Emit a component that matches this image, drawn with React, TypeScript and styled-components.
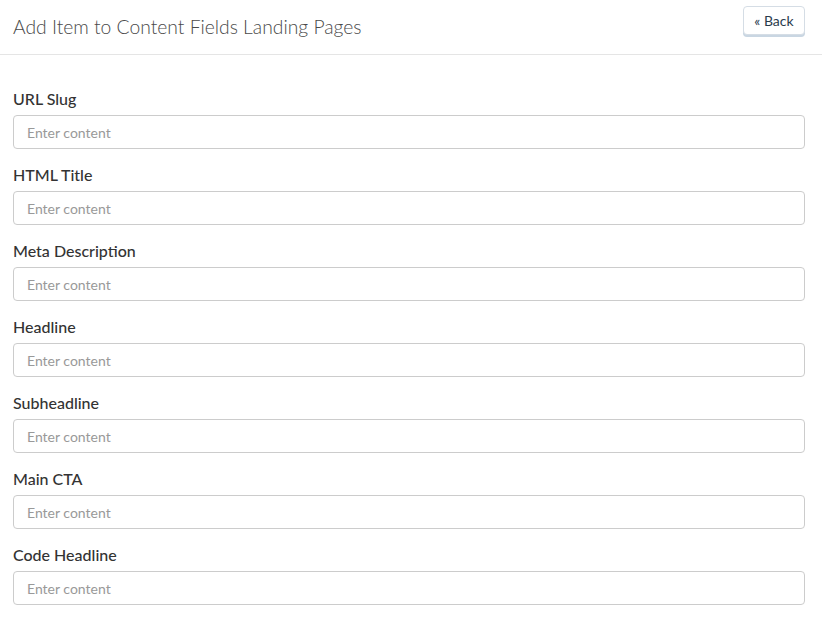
import styled, { createGlobalStyle } from "styled-components";

const GlobalStyle = createGlobalStyle`
  body {
    margin: 0;
    background: #fff;
    font-family: Lato, "Open Sans", sans-serif;
    color: #333;
  }
`;

const Page = styled.div`
  width: 822px;
`;

const Header = styled.header`
  height: 55px;
  border-bottom: 1px solid #e5e5e5;
  display: flex;
  align-items: flex-start;
  justify-content: space-between;
  padding: 0 17px 0 13px;
  box-sizing: border-box;
`;

const Title = styled.h1`
  margin: 15px 0 0;
  font-size: 19.3px;
  line-height: 24px;
  font-weight: 300;
  color: #4a4a4a;
`;

const BackButton = styled.button`
  font-family: Lato, sans-serif;
  font-size: 14px;
  color: #2a3b4d;
  background: #fff;
  border: 1px solid #d5dde5;
  border-radius: 4px;
  box-shadow: 0 2px 0 #c9d6e2;
  height: 29px;
  width: 62px;
  padding: 0;
  margin-top: 6px;
  cursor: pointer;
`;

const Form = styled.form`
  padding: 34px 17px 20px 13px;
  display: flex;
  flex-direction: column;
  gap: 16px;
`;

const Field = styled.div`
  display: flex;
  flex-direction: column;
  gap: 6px;
`;

const Label = styled.label`
  font-size: 16px;
  line-height: 20px;
  font-weight: 500;
  color: #333;
`;

const Input = styled.input`
  height: 34px;
  box-sizing: border-box;
  border: 1px solid #ccc;
  border-radius: 4px;
  padding: 0 13px;
  font-family: Lato, sans-serif;
  font-size: 14px;
  color: #333;

  &::placeholder {
    color: #999;
  }
`;

const fields = [
  "URL Slug",
  "HTML Title",
  "Meta Description",
  "Headline",
  "Subheadline",
  "Main CTA",
  "Code Headline",
];

export default function App() {
  return (
    <Page>
      <GlobalStyle />
      <Header>
        <Title>Add Item to Content Fields Landing Pages</Title>
        <BackButton type="button">« Back</BackButton>
      </Header>
      <Form>
        {fields.map((name) => (
          <Field key={name}>
            <Label>{name}</Label>
            <Input type="text" placeholder="Enter content" />
          </Field>
        ))}
      </Form>
    </Page>
  );
}
